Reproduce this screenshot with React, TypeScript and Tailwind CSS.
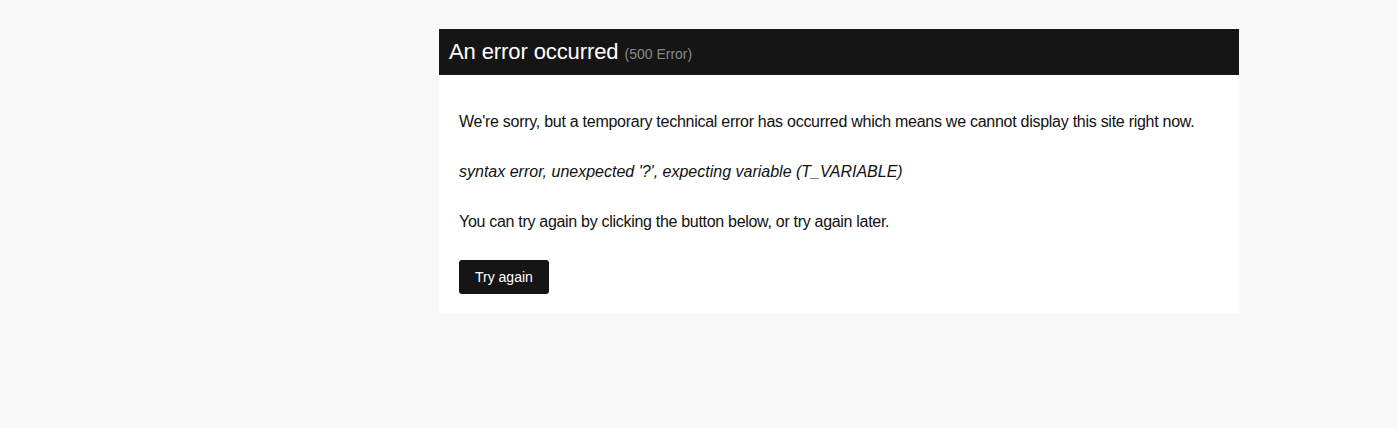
export default function App() {
  return (
    <div className="min-h-screen w-full bg-[#f8f8f8] font-['Liberation_Sans',Arial,sans-serif] text-[#111]">
      <div className="flex pl-[439px] pt-[29px]">
        <div className="w-[800px] bg-white">
          <div className="flex h-[46px] items-center bg-[#151515] px-[10px]">
            <h1 className="text-[22px] leading-none tracking-[-0.1px] text-white">
              An error occurred{" "}
              <small className="text-[14px] tracking-normal text-[#888]">(500 Error)</small>
            </h1>
          </div>
          <div className="px-5 pb-5 pt-5 text-[16px] leading-6">
            <p className="mt-[15px] tracking-[-0.27px]">
              We're sorry, but a temporary technical error has occurred which means we cannot display this site right now.
            </p>
            <p className="mt-[26px] italic">syntax error, unexpected '?', expecting variable (T_VARIABLE)</p>
            <p className="mt-[26px] tracking-[-0.3px]">You can try again by clicking the button below, or try again later.</p>
            <button className="mt-[26px] h-[34px] rounded-[3px] bg-[#151515] px-4 text-[14px] text-white">
              Try again
            </button>
          </div>
        </div>
      </div>
    </div>
  );
}
